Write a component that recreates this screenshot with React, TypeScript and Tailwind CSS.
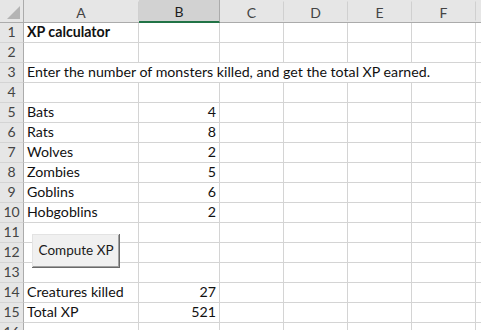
import React from "react";

const COLS = [
  { key: "A", w: "w-[115px]" },
  { key: "B", w: "w-[81px]" },
  { key: "C", w: "w-[64px]" },
  { key: "D", w: "w-[64px]" },
  { key: "E", w: "w-[64px]" },
  { key: "F", w: "w-[64px]" },
];

type Row = { a?: string; b?: string; bold?: boolean; overflow?: boolean };

const ROWS: Row[] = [
  { a: "XP calculator", bold: true },
  {},
  { a: "Enter the number of monsters killed, and get the total XP earned.", overflow: true },
  {},
  { a: "Bats", b: "4" },
  { a: "Rats", b: "8" },
  { a: "Wolves", b: "2" },
  { a: "Zombies", b: "5" },
  { a: "Goblins", b: "6" },
  { a: "Hobgoblins", b: "2" },
  {},
  {},
  {},
  { a: "Creatures killed", b: "27" },
  { a: "Total XP", b: "521" },
  {},
];

const font = "font-['Lato','Liberation_Sans',sans-serif]";

export default function App() {
  return (
    <div className={`relative w-[481px] h-[330px] overflow-hidden bg-white ${font} text-[14.2px] text-[#111]`}>
      {/* header row */}
      <div className="flex h-[23px] bg-[#e6e6e6] border-b border-[#ababab]">
        <div className="relative w-[24px] shrink-0 border-r border-[#ababab]">
          <div className="absolute right-[3px] bottom-[3px] w-0 h-0 border-l-[13px] border-l-transparent border-b-[13px] border-b-[#b4b4b4]" />
        </div>
        {COLS.map((c) => (
          <div
            key={c.key}
            className={`${c.w} shrink-0 flex items-center justify-center pt-[1px] text-[14px] ${
              c.key === "B"
                ? "bg-[#d2d2d2] text-[#1e1e1e] border-b-2 border-[#217346] -mb-[1px] border-r border-r-[#ababab]"
                : "text-[#444] border-r border-[#d0d0d0] mt-[3px] -translate-y-[1.5px]"
            }`}
          >
            {c.key}
          </div>
        ))}
        <div className="flex-1" />
      </div>
      {ROWS.map((r, i) => (
        <div key={i} className="flex h-[20px]">
          <div className="w-[24px] shrink-0 bg-[#e6e6e6] border-r border-b border-r-[#ababab] border-b-[#d4d4d4] flex items-end justify-center pb-[1px] text-[#444] leading-none text-[14px]">
            <span className="mb-[2px]">{i + 1}</span>
          </div>
          {COLS.map((c, ci) => {
            const noRight = r.overflow && ci < 5;
            return (
              <div
                key={c.key}
                className={`${c.w} shrink-0 border-b border-[#d4d4d4] ${noRight ? "" : "border-r"} relative flex items-end leading-none pb-[3px] ${
                  ci === 1 ? "justify-end pr-[3px]" : "pl-[3px]"
                }`}
              >
                {ci === 0 && r.a ? (
                  <span className={`whitespace-nowrap ${r.bold ? "font-bold" : ""}`}>{r.a}</span>
                ) : null}
                {ci === 1 && r.b ? <span>{r.b}</span> : null}
              </div>
            );
          })}
          <div className="flex-1 border-b border-[#d4d4d4]" />
        </div>
      ))}
      <button className="absolute left-[32px] top-[234px] w-[88px] h-[34px] bg-[#f0f0f0] shadow-[inset_-1px_-1px_0_#696969,inset_1px_1px_0_#e3e3e3,inset_-2px_-2px_0_#a0a0a0] text-[13.5px] text-[#1a1a1a] flex items-center justify-center pb-[1px]">
        Compute XP
      </button>
    </div>
  );
}
